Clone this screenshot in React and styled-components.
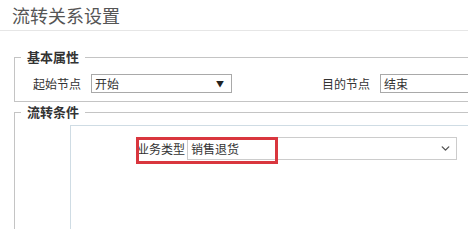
import React from 'react';
import styled, { createGlobalStyle } from 'styled-components';
import { ChevronDown } from 'lucide-react';

const GlobalStyle = createGlobalStyle`
  html, body {
    margin: 0;
    padding: 0;
    overflow: hidden;
    background: #fff;
  }
  body {
    font-family: 'Noto Sans CJK SC', 'Noto Sans', sans-serif;
    font-size: 12px;
    color: #333;
  }
`;

const Page = styled.div`
  width: 468px;
  height: 229px;
  overflow: hidden;
`;

const Header = styled.div`
  height: 30px;
  line-height: 30px;
  padding-left: 12px;
  border-bottom: 1px solid #e6e6e6;
  font-size: 18px;
  color: #555;
`;

const Content = styled.div`
  padding: 18px 0 0 14px;
`;

const Group = styled.fieldset`
  margin: 0 0 ${(p) => p.$gap || 0}px 0;
  padding: 0 0 ${(p) => p.$bottom || 0}px 6px;
  border: 1px solid #c4c4c4;
  border-right: none;
  min-width: 0;
  height: ${(p) => (p.$height ? `${p.$height}px` : 'auto')};
  box-sizing: border-box;
`;

const Legend = styled.legend`
  padding: 0 6px;
  font-size: 13px;
  line-height: 16px;
  font-weight: bold;
  color: #333;
`;

const Row = styled.div`
  display: flex;
  align-items: center;
  padding: 9px 0 0 12px;
  gap: 10px;
`;

const Label = styled.span`
  font-size: 12px;
  line-height: 19px;
  color: #333;
  white-space: nowrap;
  margin-left: ${(p) => p.$offset || 0}px;
`;

const OldSelect = styled.div`
  display: flex;
  align-items: center;
  justify-content: space-between;
  width: ${(p) => p.$width || 141}px;
  height: 19px;
  box-sizing: border-box;
  border: 1px solid #a9a9a9;
  padding: 0 7px 0 3px;
  background: #fff;
  flex-shrink: 0;
  font-size: 12px;
`;

const Arrow = styled.span`
  font-size: 8px;
  color: #222;
`;

const ConditionBox = styled.div`
  margin: 5px 0 0 49px;
  height: 140px;
  border: 1px solid #cfdce4;
  border-right: none;
  padding-top: 11px;
  box-sizing: border-box;
`;

const FormRow = styled.div`
  position: relative;
  display: grid;
  grid-template-columns: 116px 270px;
  align-items: center;
`;

const FormLabel = styled.span`
  text-align: right;
  padding-right: 2px;
  font-size: 12px;
  color: #333;
  white-space: nowrap;
`;

const Select = styled.div`
  display: flex;
  align-items: center;
  justify-content: space-between;
  height: 23px;
  box-sizing: border-box;
  border: 1px solid #cccccc;
  padding: 0 4px 0 3px;
  background: #fff;
  font-size: 12px;
  color: #333;
`;

const Highlight = styled.div`
  position: absolute;
  left: 65px;
  top: 0;
  width: 142px;
  height: 27px;
  box-sizing: border-box;
  border: 3px solid #d9363e;
  pointer-events: none;
`;

export default function App() {
  return (
    <Page>
      <GlobalStyle />
      <Header>流转关系设置</Header>
      <Content>
        <Group $bottom={8} $gap={2}>
          <Legend>基本属性</Legend>
          <Row>
            <Label>起始节点</Label>
            <OldSelect>
              <span>开始</span>
              <Arrow>▼</Arrow>
            </OldSelect>
            <Label $offset={80}>目的节点</Label>
            <OldSelect $width={141}>
              <span>结束</span>
            </OldSelect>
          </Row>
        </Group>
        <Group $height={200}>
          <Legend>流转条件</Legend>
          <ConditionBox>
            <FormRow>
              <FormLabel>业务类型</FormLabel>
              <Select>
                <span>销售退货</span>
                <ChevronDown size={13} strokeWidth={2.6} color="#555" />
              </Select>
              <Highlight />
            </FormRow>
          </ConditionBox>
        </Group>
      </Content>
    </Page>
  );
}
